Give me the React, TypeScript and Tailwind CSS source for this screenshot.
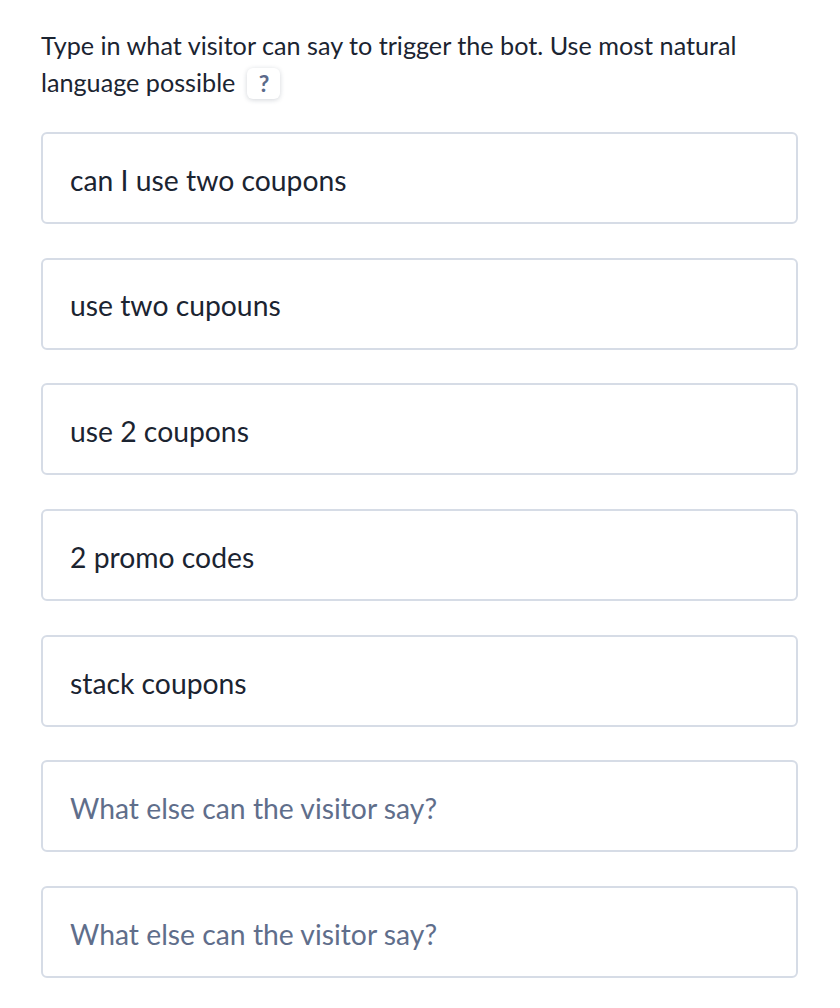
import React from "react";

const items = [
  { text: "can I use two coupons", ph: false },
  { text: "use two cupouns", ph: false },
  { text: "use 2 coupons", ph: false },
  { text: "2 promo codes", ph: false },
  { text: "stack coupons", ph: false },
  { text: "What else can the visitor say?", ph: true },
  { text: "What else can the visitor say?", ph: true },
];

export default function App() {
  return (
    <div
      className="w-[840px] min-h-[1008px] bg-white pl-[41px] pr-[42px] pt-[27px]"
      style={{ fontFamily: "Lato, 'Noto Sans', sans-serif" }}
    >
      <p className="text-[25.2px] leading-[37px] text-[#1b2431] pr-[30px]">
        Type in what visitor can say to trigger the bot. Use most natural
        language possible
        <span className="inline-flex items-center justify-center ml-[12px] w-[33px] h-[31px] rounded-[6px] bg-white shadow-[0_1px_5px_rgba(30,45,70,0.2)] text-[23px] font-bold text-[#5b6a8a] align-[0px] leading-none">
          ?
        </span>
      </p>
      <div className="mt-[31px] flex flex-col gap-[33.7px]">
        {items.map((it, i) => (
          <div
            key={i}
            className="h-[92px] rounded-[6px] border-2 border-[#d6dce6] flex items-center pl-[27px] pt-[4px]"
          >
            <span
              className={
                "text-[28.3px] " +
                (it.ph ? "text-[#5f6e8b]" : "text-[#1b2431]")
              }
            >
              {it.text}
            </span>
          </div>
        ))}
      </div>
    </div>
  );
}
